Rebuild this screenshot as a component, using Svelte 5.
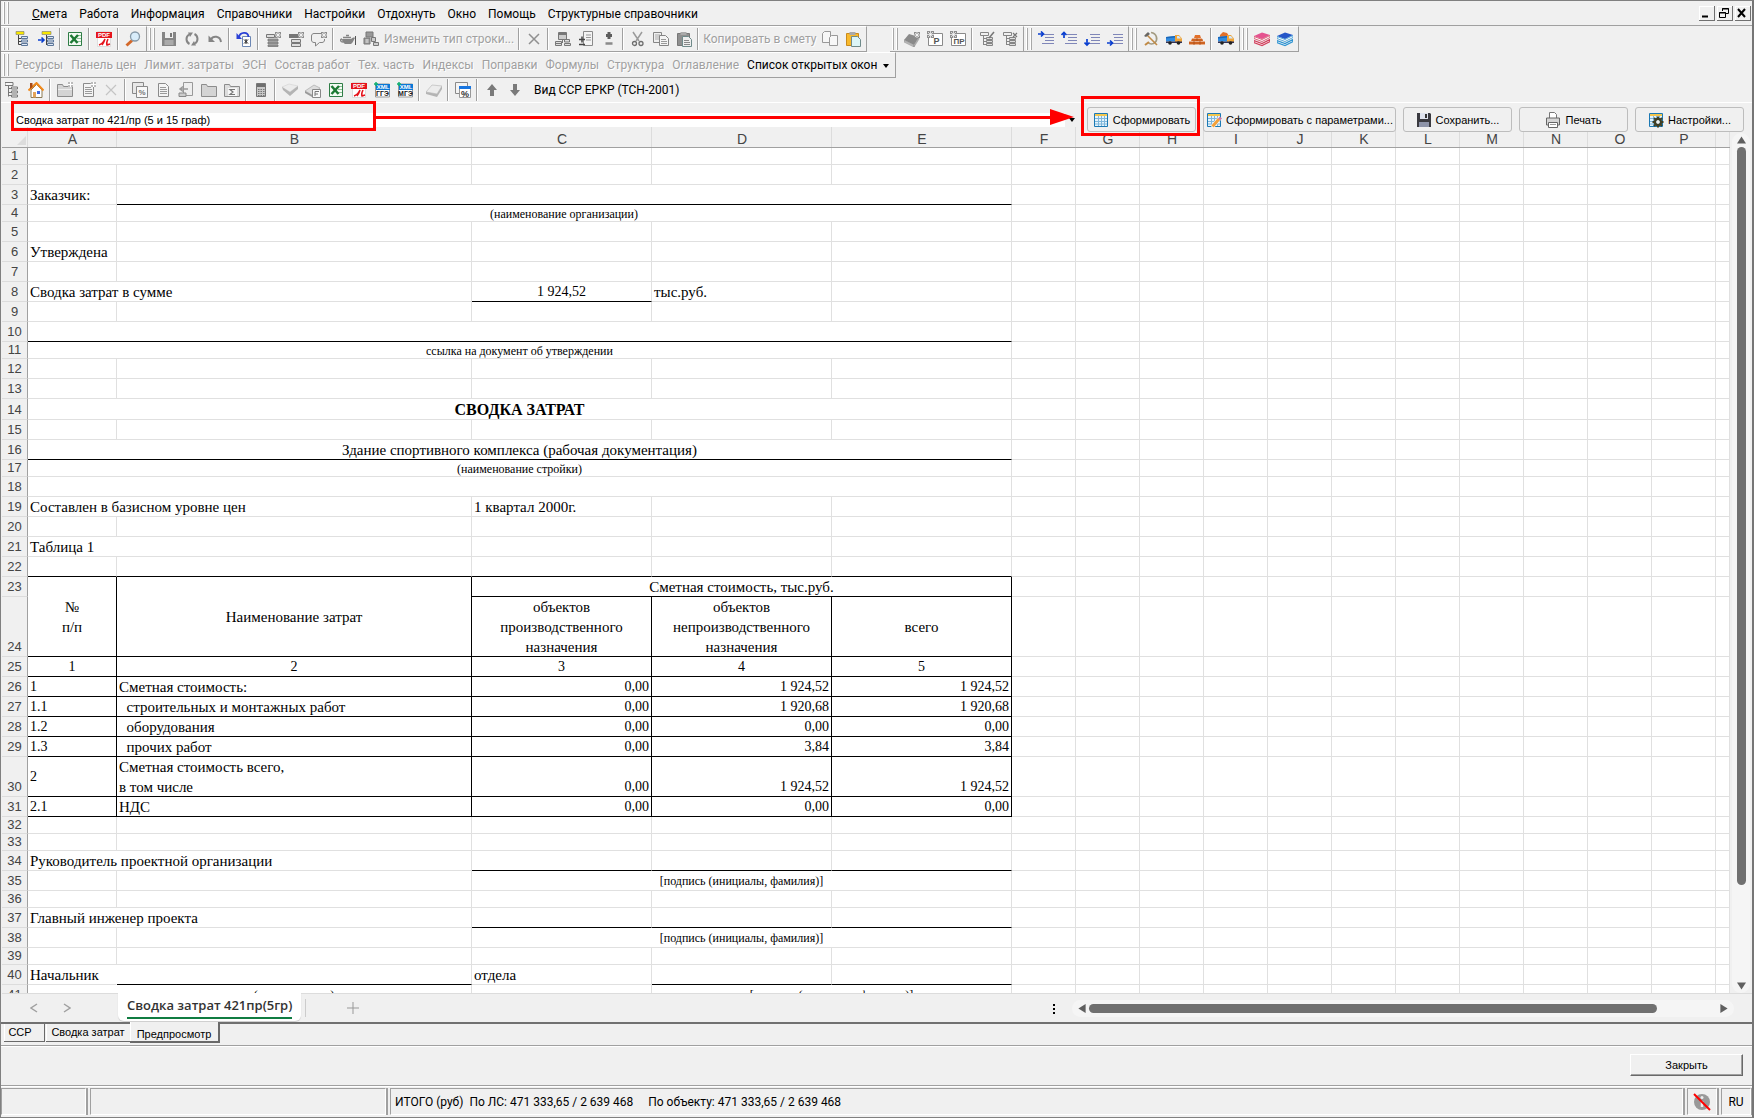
<script>
  const doc = '<path d="M3.5 1.5h7l3 3v10h-10z" fill="#f4f4f4" stroke="#8a8a8a"/><path d="M5 5.5h6M5 7.5h7M5 9.5h7M5 11.5h7" stroke="#9a9a9a"/>';
  const star = '<path d="M10 1h6v6h-6z" fill="#8e8e8e"/><path d="M13 1v6M10 4h6M11 2l4 4M15 2l-4 4" stroke="#fff" stroke-width=".7"/>';
  const truck = '<path d="M0 6l9-1v5.500H0z" fill="#2f8be0"/><path d="M0 6l9-1v1.500l-9 1z" fill="#1b66b8"/><path d="M9 4h4l3 3.500v3.500H9z" fill="#f0a53a"/><path d="M11 5h2l2 2.500h-4z" fill="#cfe8ff"/><path d="M0 10.500h16v1.500H0z" fill="#335"/><circle cx="4" cy="12" r="1.800" fill="#222"/><circle cx="12.500" cy="12" r="1.800" fill="#222"/>';
  const books = (a, b) => `<path d="M0 5l8-3.500L16 4l-8 4z" fill="${a}"/><path d="M0 5.500L8 8.500l8-4v2l-8 4-8-3z" fill="#fff" stroke="${b}" stroke-width=".8"/><path d="M0 9.500l8 3 8-4v2l-8 4-8-3z" fill="#fff" stroke="${b}" stroke-width="1.200"/>`;
  const lines = '<path d="M6 3.500h10M7 6.500h9M7 9.500h9M4 12.500h12" stroke="#7f86b8"/>';
  const tree = '<path d="M3.500 4v9.500M3.500 7.500h3M3.500 10.500h3M3.500 13.500h3" stroke="#444" fill="none"/><path d="M6.500 5.500h6v2h-6zM6.500 9h6v2h-6zM6.500 12.500h6v2h-6z" fill="#dfe8f5" stroke="#5c7699"/>';
  const grayTree = '<path d="M1.500 1.500h8v3h-8zM4.500 5v9M4.500 7.500h3M4.500 10.500h3M4.500 13.500h3" stroke="#858585" fill="none"/><path d="M7.500 6.500h6v2h-6zM7.500 9.500h6v2h-6zM7.500 12.500h6v2h-6z" fill="#ddd" stroke="#858585"/>';
  const clip = (f, s, p) => `<path d="M1.500 2.500h12v12h-12z" fill="${f}" stroke="${s}"/><path d="M4.500 1h6v3h-6z" fill="#aaa"/><path d="M6.500 5.500h6l3 3v7h-9z" fill="${p}" stroke="#6f8a8a"/>`;
  const sheet = '<path d="M1.500 1.500h13v13h-13z" fill="#e4f3fb" stroke="#1b79b4"/><path d="M2 2h12v2H2z" fill="#f3c64d"/><path d="M5.500 4v10M8.500 4v10M11.500 4v10M2 6.500h12M2 9.500h12M2 12h12" stroke="#7fb6db"/>';
  const page = '<path d="M1.500 2.500h14v12h-14z" fill="#fff" stroke="#8a8a8a"/><path d="M0 0h7v7H0z" fill="#8e8e8e"/><path d="M3.500 0v7M0 3.500h7M1 1l5 5M6 1L1 6" stroke="#fff" stroke-width=".7"/>';
  const pdf = '<path d="M1.500.5h13v15h-13z" fill="#fff" stroke="#ddd"/><path d="M0 1h16v6H0z" fill="#e5141c"/><text x="8" y="6.300" font-size="6" font-weight="700" fill="#fff" text-anchor="middle" font-family="Liberation Sans">PDF</text><path d="M3 14c3-1 5-4 6-6M9 8c-1 3-2 5-3 6M12 8c-1 2-2 4-1 6l3-1" fill="none" stroke="#e5141c" stroke-width="1.500"/>';
  const xml = (t) => `<path d="M1.500 2h14v13h-14z" fill="#fff" stroke="#999"/><path d="M2 2h14v6H2z" fill="#0a78d6"/><text x="9" y="7.200" font-size="6" font-weight="700" fill="#fff" text-anchor="middle" font-family="Liberation Sans">XML</text><text x="8.500" y="14.300" font-size="7" font-weight="700" fill="#222" text-anchor="middle" font-family="Liberation Sans">${t}</text><path d="M0 2h4M2 0v4" stroke="#11b070" stroke-width="1.500"/>`;
  const folder = '<path d="M.500 2.500h5l1 2h9v10h-15z" fill="#d4d4d4" stroke="#8c8c8c"/>';

  const icons = {
    treeA: '<path d="M1 .5h8v3H1z" fill="#f7e600" stroke="#777" stroke-width=".6"/>' + tree,
    treeB: '<path d="M4 .5h9v3H4z" fill="#f7e600" stroke="#777" stroke-width=".6"/><path d="M8.500 4v10" stroke="#444"/><path d="M9.500 5.500h6v2h-6zM9.500 9h6v2h-6zM9.500 12.500h6v2h-6z" fill="#dfe8f5" stroke="#5c7699"/><path d="M0 9h6M3.500 6.500L6 9l-2.500 2.500" stroke="#0a3fd0" stroke-width="1.600" fill="none"/>',
    excel: '<path d="M1.500 1.500h13v13h-13z" fill="#f4fbf4" stroke="#2f7d46"/><path d="M10 4.500h4M10 7.500h4M10 10.500h4" stroke="#8cbf95"/><path d="M3.500 4l7 8M11 4l-7.500 8" stroke="#1d7a34" stroke-width="2.500"/>',
    pdf,
    lens: '<path d="M7 9.500L1.500 14.500" stroke="#d3682a" stroke-width="3"/><circle cx="10" cy="5.500" r="4.500" fill="#d8edfb" stroke="#8699a8" stroke-width="1.300"/>',
    save: '<path d="M1 1h14v14H1z" fill="#858585"/><path d="M4 1h8v6H4z" fill="#eee"/><path d="M9 2h2v4H9z" fill="#777"/><path d="M3.500 9h9v5h-9z" fill="#aaa"/>',
    refresh: '<path d="M5.500 13A5.500 5.500 0 0 1 5 3.500M10.500 3a5.500 5.500 0 0 1 .500 9.500" fill="none" stroke="#858585" stroke-width="2"/><path d="M4 1.500h5L6 6zM12 14.500H7l3-4.500z" fill="#858585"/>',
    undo: '<path d="M4 8.500c2-4 9-4 10 2.500" fill="none" stroke="#858585" stroke-width="2"/><path d="M1.500 4.500v6.500H8z" fill="#858585"/>',
    undoDoc: '<path d="M6.500 5.500h8v10h-8z" fill="#fff" stroke="#6c87b4"/><path d="M8 8.500l4 4M12 8.500l-4 4M10 8v5" stroke="#222"/><path d="M3 6C4 1 12 0 12.500 6" fill="none" stroke="#2a41d6" stroke-width="1.800"/><path d="M.5 2v6H6z" fill="#2a41d6"/>',
    rowsA: '<path d="M1.500 3.500h8v3h-8z" fill="#ddd" stroke="#777"/><path d="M3 8h10v2H3zM3 11h10v2H3zM3 14h10v1.500H3z" fill="#999" stroke="#777" stroke-width=".8"/>' + star,
    rowsB: '<path d="M1 3h9v4H1z" fill="#777"/><path d="M3.500 8.500h9v3h-9zM3.500 12.500h9v3h-9z" fill="#ddd" stroke="#777"/>' + star,
    note: '<path d="M10 2.500H3c-1.500 0-2.500 1-2.500 2.500v4c0 1.500 1 2.500 2.500 2.500h1.500v3.500l4-3.500h2.500c1.500 0 2.500-1 2.500-2.500V8" fill="none" stroke="#858585"/>' + star,
    teapot: '<path d="M2 8h9c1-1 3-2 4-1-1 1-2 5-4 6H5C3 12 2 10 2 8z" fill="#858585"/><path d="M3 6.500h8M6 4.500h3M2 8C0 8 0 11 3 11" stroke="#858585" fill="none" stroke-width="1.500"/><path d="M15.500 5v9" stroke="#555"/>',
    blocks: '<path d="M3 1h7v5H3zM1 7h6v6H1z" fill="#999" stroke="#777"/><path d="M8.500 6.500h4v4h-4zM10.500 11.500h5v3h-5z" fill="#ccc" stroke="#777"/><path d="M2.500 9h3M2.500 11h3" stroke="#eee"/>',
    cross: '<path d="M3 3l10 10M13 3L3 13" stroke="#909090" stroke-width="1.500"/>',
    crossL: '<path d="M3 3l10 10M13 3L3 13" stroke="#c4c4c4" stroke-width="1.200"/>',
    calcTree: '<path d="M3.500 1.500h8v7h-8z" fill="#ccc" stroke="#777"/><path d="M4 2h7v2H4z" fill="#777"/><path d="M7.500 9v3M.5 10.500h6v4h-6zM9.500 8.500h5v2.500h-5zM9.500 12.500h6v2h-6z" fill="#ddd" stroke="#777"/><path d="M1 12.500h5" stroke="#777"/>',
    addDoc: '<path d="M5.500.5h9v14h-9z" fill="#f4f4f4" stroke="#8a8a8a"/><path d="M8 4h5M8 6.500h5M8 9h5" stroke="#999"/><path d="M1 8.500h6M4 5.500v6M1 13.500h6" stroke="#444" stroke-width="1.500"/>',
    plusMinus: '<path d="M8 1v7M5 4.500h6" stroke="#5d5d5d" stroke-width="3"/><path d="M4.500 12.500h7" stroke="#8a8a8a" stroke-width="2.500"/>',
    cut: '<path d="M3 1l6 9M12 1L6 10" stroke="#9a9a9a" stroke-width="1.500"/><circle cx="4.500" cy="12.500" r="2" fill="none" stroke="#6e6e6e" stroke-width="1.300"/><circle cx="11" cy="12.500" r="2" fill="none" stroke="#6e6e6e" stroke-width="1.300"/>',
    copy: '<path d="M.5 1.500h8v10h-8z" fill="#eee" stroke="#858585"/><path d="M2 4h5M2 6h5M2 8h5" stroke="#aaa"/><path d="M6.500 4.500h6l3 3v7h-9z" fill="#f4f4f4" stroke="#858585"/><path d="M8 8.500h5M8 10.500h6M8 12.500h6" stroke="#999"/>',
    paste: clip('#8f8f8f', '#777', '#eee') + '<path d="M8 9.500h5M8 11.500h6M8 13.500h6" stroke="#888"/>',
    copyL: '<path d="M.5 2.500l2-2h6v11h-8z" fill="#f7f7f7" stroke="#999"/><path d="M7.500 6.500l2-2h6v10h-8z" fill="#f7f7f7" stroke="#999"/>',
    pasteC: clip('#f8b92c', '#c98a1c', '#dcf5f7'),
    stamp: '<path d="M0 9l5-6 10 3-5 8z" fill="#8a8a8a"/><path d="M0 9l10 5v2L0 11zM10 14l5-8v2l-5 8z" fill="#bbb" stroke="#888" stroke-width=".5"/>' + star,
    pageR: page + '<text x="9.500" y="13.300" font-size="9" font-weight="700" fill="#555" text-anchor="middle" font-family="Liberation Sans">Р</text>',
    pagePR: page + '<text x="9" y="13.300" font-size="8" font-weight="700" fill="#555" text-anchor="middle" font-family="Liberation Sans">ПР</text>',
    treeEdit: grayTree + '<path d="M15 1l-5 6" stroke="#777" stroke-width="1.500"/>',
    treeDel: grayTree + '<path d="M11 2l4 4M15 2l-4 4" stroke="#777" stroke-width="1.200"/>',
    lvl1: lines + '<path d="M0 3h5M3 .5L5.500 3 3 5.500" stroke="#0a3fd0" stroke-width="1.700" fill="none"/>',
    lvl2: lines + '<path d="M3 7V2M.5 4L3 1.500 5.500 4" stroke="#0a3fd0" stroke-width="1.700" fill="none"/>',
    lvl3: lines + '<path d="M3 8v6M.5 11.500L3 14l2.500-2.500" stroke="#0a3fd0" stroke-width="1.700" fill="none"/>',
    lvl4: lines + '<path d="M0 12h5M3 9.500L5.500 12 3 14.500" stroke="#0a3fd0" stroke-width="1.700" fill="none"/>',
    hammer: '<path d="M8 1.500c6 1 7 7 4 10-2 2-5 2-7 0" fill="none" stroke="#a39b82" stroke-width="1.700"/><path d="M3 3l11 11" stroke="#c18a45" stroke-width="1.600"/><path d="M1 5l4-4 2 2-4 3z" fill="#666"/><path d="M6 11l-4 3" stroke="#c18a45" stroke-width="2"/>',
    truck,
    bricks: '<path d="M6 4h5l1 3H5zM3 7.500h10l1 2.500H2zM0 10.500h16v3H0z" fill="#e2702a"/><path d="M3 9h11M0 12h16M8 7v3M5 10v4M11 10v4" stroke="#a84a16" stroke-width=".7"/>',
    truckLoad: '<path d="M2 4l3-3 4 1 2 3-9 1z" fill="#e2702a"/>' + truck,
    booksR: books('#e5528f', '#d0405c'),
    booksB: books('#2456c8', '#2f93d0'),
    treeG: '<path d="M0 .5h8v3H0zM3.500 4v10.500M3.500 6.500h3M3.500 10.500h3M3.500 13.500h3" fill="#f7f7f7" stroke="#777"/><path d="M6.500 5h6v2h-6zM6.500 9h6v2h-6zM6.500 13h6v2h-6z" fill="#eee" stroke="#777"/>',
    home: '<path d="M3 8v7.500h11V8L8.500 2.500z" fill="#fff" stroke="#8a7a55"/><path d="M.500 8.500L8.500 1l7 7.500" fill="none" stroke="#f08a1d" stroke-width="2"/><path d="M2 1h2.500v4L2 7z" fill="#a84a16"/><path d="M9 9h3v3H9z" fill="#3d68e0"/><path d="M5 10h3v5.500H5z" fill="#e2a35c"/>',
    folderNew: folder + '<path d="M1 7.500h14" stroke="#eee"/><path d="M11 0h5v5h-5z" fill="#bbb"/><path d="M13.500 0v5M11 2.500h5" stroke="#fff"/>',
    docNew: doc + '<path d="M11 0h5v5h-5z" fill="#bbb"/><path d="M13.500 0v5M11 2.500h5" stroke="#fff"/>',
    percent: '<path d="M.5.500h11v11H.5z" fill="#e8e8e8" stroke="#8a8a8a"/><path d="M4.500 4.500h11v11h-11z" fill="#f8f8f8" stroke="#8a8a8a"/><text x="10" y="13" font-size="8" font-weight="700" fill="#777" text-anchor="middle" font-family="Liberation Sans">%</text>',
    doc,
    docOut: '<path d="M5.500.5h9v13h-9z" fill="#eee" stroke="#999"/><path d="M1 11h7v3.500H1z" fill="#ccc" stroke="#888"/><path d="M10 7H2M5 4.500L2 7l3 2.500" stroke="#999" fill="none" stroke-width="1.500"/>',
    folder,
    sigma: '<path d="M.500 2.500h5l1 2h9v10h-15z" fill="#ddd" stroke="#8c8c8c"/><path d="M4 6h9v8H4z" fill="#f7f7f7"/><path d="M11 7.500H6l3 2.500-3 2.500h5" fill="none" stroke="#777" stroke-width="1.200"/>',
    calc: '<path d="M3.500 1.500h9v13h-9z" fill="#c8c8c8" stroke="#777"/><path d="M4 2h8v3H4z" fill="#6e6e6e"/><path d="M5 7.500h7M5 9.500h7M5 11.500h7M5 13.500h7" stroke="#777" stroke-dasharray="1.500 1"/>',
    bookG: '<path d="M0 5l7-3 9 2-8 6z" fill="#ececec" stroke="#ccc" stroke-width=".5"/><path d="M0 5l8 5 8-6v3l-8 7-7-6z" fill="#b4b4b4"/>',
    bookF: '<path d="M0 9l9-6 6 3-8 7z" fill="#ddd" stroke="#aaa" stroke-width=".7"/><path d="M0 9l7 4v2L0 11z" fill="#999"/><path d="M7.500 7.500h8v8h-8z" fill="#f7f7f7" stroke="#888"/><path d="M10 14V9.500h4M10 12h3" fill="none" stroke="#777"/>',
    xmlG: xml('ГГЭ'),
    xmlM: xml('МГЭ'),
    bookO: '<path d="M0 10l6-7 10 1-5 8z" fill="#ececec" stroke="#bbb" stroke-width=".7"/><path d="M0 10l11 2 5-8v3l-5 8-11-3z" fill="#b4b4b4"/>',
    window: '<path d="M.5.500h12v11H.5z" fill="#f4f4f4" stroke="#8a8a8a"/><path d="M4.500 4.500h11v11h-11z" fill="#fff" stroke="#999"/><path d="M4 4h12v3H4z" fill="#1976e0"/><text x="10" y="14.500" font-size="9" font-weight="700" fill="#333" text-anchor="middle" font-family="Liberation Sans">%</text>',
    up: '<path d="M8 2l5 6h-3v6H6V8H3z" fill="#7a7a7a"/>',
    down: '<path d="M8 14L3 8h3V2h4v6h3z" fill="#7a7a7a"/>',
    sheet,
    sheetEdit: sheet + '<path d="M14 6L6 15" stroke="#fff" stroke-width="4"/><path d="M13 7L6.500 14.500" stroke="#f2a13b" stroke-width="3"/><path d="M15 5.500l-2 2" stroke="#c77ca8" stroke-width="3"/>',
    disk: '<path d="M1 1h13l1 1v13H1z" fill="#3a3a40"/><path d="M4 1h8v6H4z" fill="#dfe3ee"/><path d="M9 2h2v4H9z" fill="#333"/><path d="M3 10h10v5H3z" fill="#8d93a8"/>',
    print: '<path d="M4.500 6V.5h5l2 2V6" fill="#fff" stroke="#777"/><path d="M1.500 6h13v7h-13z" fill="#d5d5d5" stroke="#666"/><path d="M3.500 10.500h9v5h-9z" fill="#fff" stroke="#666"/><path d="M5 12.500h6" stroke="#999"/>',
    gear: sheet + '<circle cx="10" cy="10" r="3" fill="none" stroke="#3f3f24" stroke-width="2.500"/><path d="M10 4.500v3M10 12.500v3M4.500 10h3M12.500 10h3M6 6l2 2M12 12l2 2M14 6l-2 2M8 12l-2 2" stroke="#3f3f24" stroke-width="2"/><circle cx="10" cy="10" r="1.800" fill="#f0f0f0"/>'
  };

  const menu = ['Смета', 'Работа', 'Информация', 'Справочники', 'Настройки', 'Отдохнуть', 'Окно', 'Помощь', 'Структурные справочники'];

  // "|" is a separator; entries starting with ":" are text commands
  const bars = [
    ['treeA', 'treeB', '|', 'excel', '|', 'pdf', '|', 'lens'],
    ['save', 'refresh', 'undo', '|', 'undoDoc', '|', 'rowsA', 'rowsB', 'note', '|', 'teapot', 'blocks', ':Изменить тип строки...', '|', 'cross', '|', 'calcTree', 'addDoc', 'plusMinus', '|', 'cut', 'copy', 'paste', '|', ':Копировать в смету', 'copyL', 'pasteC'],
    ['stamp', 'pageR', 'pagePR', '|', 'treeEdit', 'treeDel'],
    ['lvl1', 'lvl2', 'lvl3', 'lvl4'],
    ['hammer', 'truck', 'bricks', '|', 'truckLoad'],
    ['booksR', 'booksB']
  ];
  const tabs2 = ['Ресурсы', 'Панель цен', 'Лимит. затраты', 'ЭСН', 'Состав работ', 'Тех. часть', 'Индексы', 'Поправки', 'Формулы', 'Структура', 'Оглавление'];
  const bar3 = ['treeG', 'home', '|', 'folderNew', 'docNew', 'crossL', '|', 'percent', 'doc', 'docOut', 'folder', 'sigma', '|', 'calc', '|', 'bookG', 'bookF', 'excel', 'pdf', 'xmlG', 'xmlM', '|', 'bookO', '|', 'window', '|', 'up', 'down'];

  const actions = [
    ['sheet', 'Сформировать', false],
    ['sheetEdit', 'Сформировать с параметрами...', true],
    ['disk', 'Сохранить...', false],
    ['print', 'Печать', false],
    ['gear', 'Настройки...', false]
  ];

  const letters = [...'ABCDEFGHIJKLMNOP', ''];
  const rest = letters.slice(5);

  // cell: [text, colspan, classes, rowspan]
  const e = ['', 1, ''];
  const five = [e, e, e, e, e];
  const num = (a, b, c, d, f) => [[a, 1, 'b r fig'], [b, 1, 'b r'], [c, 1, 'b r fig end'], [d, 1, 'b r fig end'], [f, 1, 'b r fig end']];
  const rows = [
    [17, [['', 2, ''], e, e, e]],
    [20, five],
    [20, [['Заказчик:', 1, ''], ['', 4, 'b']]],
    [17, [e, ['(наименование организации)', 4, 'mid small']]],
    [20, five],
    [20, [['Утверждена', 1, ''], e, e, e, e]],
    [20, five],
    [20, [['Сводка затрат в сумме', 2, ''], ['1 924,52', 1, 'mid fig b'], ['тыс.руб.', 1, ''], e]],
    [20, five],
    [20, [['', 5, 'b']]],
    [17, [['ссылка на документ об утверждении', 5, 'mid small']]],
    [20, five],
    [20, five],
    [21, [['СВОДКА ЗАТРАТ', 5, 'mid head']]],
    [20, five],
    [20, [['Здание спортивного комплекса (рабочая документация)', 5, 'mid b']]],
    [17, [['(наименование стройки)', 5, 'mid small']]],
    [20, [['', 5, '']]],
    [20, [['Составлен в базисном уровне цен', 2, ''], ['1 квартал 2000г.', 1, ''], e, e]],
    [20, five],
    [20, [['Таблица 1', 2, ''], e, e, e]],
    [20, [['', 1, 'b'], ['', 1, 'b'], ['', 1, 'b'], ['', 1, 'b'], ['', 1, 'b']]],
    [20, [['№\nп/п', 1, 'mid vmid b r', 2], ['Наименование затрат', 1, 'mid vmid b r', 2], ['Сметная стоимость, тыс.руб.', 3, 'mid b r']]],
    [60, [['объектов\nпроизводственного\nназначения', 1, 'mid vmid b r'], ['объектов\nнепроизводственного\nназначения', 1, 'mid vmid b r'], ['всего', 1, 'mid vmid b r']]],
    [20, [['1', 1, 'mid fig b r'], ['2', 1, 'mid fig b r'], ['3', 1, 'mid fig b r'], ['4', 1, 'mid fig b r'], ['5', 1, 'mid fig b r']]],
    [20, num('1', 'Сметная стоимость:', '0,00', '1 924,52', '1 924,52')],
    [20, num('1.1', '  строительных и монтажных работ', '0,00', '1 920,68', '1 920,68')],
    [20, num('1.2', '  оборудования', '0,00', '0,00', '0,00')],
    [20, num('1.3', '  прочих работ', '0,00', '3,84', '3,84')],
    [40, [['2', 1, 'vmid fig b r'], ['Сметная стоимость всего,\nв том числе', 1, 'b r'], ['0,00', 1, 'b r fig end'], ['1 924,52', 1, 'b r fig end'], ['1 924,52', 1, 'b r fig end']]],
    [20, num('2.1', 'НДС', '0,00', '0,00', '0,00')],
    [17, five],
    [17, five],
    [20, [['Руководитель проектной организации', 2, ''], ['', 1, 'b'], ['', 1, 'b'], ['', 1, 'b']]],
    [20, [e, e, ['[подпись (инициалы, фамилия)]', 3, 'mid vmid small']]],
    [17, five],
    [20, [['Главный инженер проекта', 2, ''], ['', 1, 'b'], ['', 1, 'b'], ['', 1, 'b']]],
    [20, [e, e, ['[подпись (инициалы, фамилия)]', 3, 'mid vmid small']]],
    [17, five],
    [20, [['Начальник', 1, 'open'], ['', 1, 'b'], ['отдела', 1, ''], ['', 1, 'b'], ['', 1, 'b']]],
    [20, [['', 1, 'open'], ['(наименование)', 1, 'mid vmid small'], e, ['[подпись (инициалы, фамилия)]', 2, 'mid vmid small']]]
  ];
</script>

{#snippet icon(name)}
  <svg class="ico" viewBox="0 0 16 16" aria-hidden="true">{@html icons[name]}</svg>
{/snippet}

{#snippet tools(items)}
  {#each items as it}
    {#if it === '|'}
      <span class="sep"></span>
    {:else if it[0] === ':'}
      <button class="cmd off">{it.slice(1)}</button>
    {:else}
      <button class="tool" aria-label={it}>{@render icon(it)}</button>
    {/if}
  {/each}
{/snippet}

<div class="app">
  <nav class="menubar">
    <span class="grip"></span>
    {#each menu as m, i}
      <button class="menu" class:first={i === 0}>{m}</button>
    {/each}
    <div class="winctl">
      <button aria-label="Свернуть"><svg viewBox="0 0 14 14"><path d="M3 10.500h6" stroke="#000" stroke-width="2" /></svg></button>
      <button aria-label="Восстановить"><svg viewBox="0 0 14 14"><path d="M5.500 5V2.500h6v5H9M5 3h7M2.500 6.500h6v5h-6zM2 7h7" fill="none" stroke="#000" /></svg></button>
      <button aria-label="Закрыть окно"><svg viewBox="0 0 14 14"><path d="M3 3l7 8M10 3l-7 8" stroke="#000" stroke-width="2" /></svg></button>
    </div>
  </nav>

  <div class="bars">
    {#each bars as b, i}
      <div class="bar" class:apart={i === 2}>
        <span class="grip"></span>
        {@render tools(b)}
      </div>
    {/each}
  </div>

  <div class="bars">
    <div class="bar texts">
      <span class="grip"></span>
      {#each tabs2 as t}
        <button class="txt off">{t}</button>
      {/each}
      <button class="txt">Список открытых окон <svg class="caret" viewBox="0 0 6 4"><path d="M0 0h6L3 4z" /></svg></button>
    </div>
  </div>

  <div class="bar3">
    {@render tools(bar3)}
    <span class="view">Вид ССР ЕРКР (ТСН-2001)</span>
  </div>

  <div class="panel">
    <div class="combo">
      <select aria-label="Форма отчёта"><option>Сводка затрат по 421/пр (5 и 15 граф)</option></select>
      <span class="drop"><svg class="caret" viewBox="0 0 6 4"><path d="M0 0h6L3 4z" /></svg></span>
      <div class="mark"></div>
      <div class="arrow"></div>
    </div>
    <div class="actions">
      {#each actions as [ic, label, wide], i}
        <button class="action" class:wide>
          {@render icon(ic)}{label}
          {#if i === 0}<span class="mark2"></span>{/if}
        </button>
      {/each}
    </div>
  </div>

  <div class="book">
    <div class="sheet">
      <table>
        <colgroup>
          <col class="c0" /><col class="cA" /><col class="cB" /><col class="cC" /><col class="cC" /><col class="cC" />
          {#each rest as l}<col class={l ? 'cF' : ''} />{/each}
        </colgroup>
        <thead>
          <tr>
            <th class="corner"><svg viewBox="0 0 9 9"><path d="M9 0v9H0z" fill="#dcdcdc" /></svg></th>
            {#each letters as l}<th>{l}</th>{/each}
          </tr>
        </thead>
        <tbody>
          {#each rows as [h, cells], i}
            <tr class="h{h}">
              <th>{i + 1}</th>
              {#each cells as [t, span, cls, rs]}
                <td class={cls} colspan={span} rowspan={rs ?? 1}>{#if t}<div>{t}</div>{/if}</td>
              {/each}
              {#each rest as _}<td></td>{/each}
            </tr>
          {/each}
        </tbody>
      </table>
    </div>
    <div class="vscroll">
      <svg viewBox="0 0 10 8"><path d="M5 0l5 8H0z" /></svg>
      <span class="vthumb"></span>
      <svg viewBox="0 0 10 8"><path d="M5 8L0 0h10z" /></svg>
    </div>
  </div>

  <div class="strip">
    <div class="navs">
      <button aria-label="Назад"><svg viewBox="0 0 8 10"><path d="M7 1L1 5l6 4" /></svg></button>
      <button aria-label="Вперёд"><svg viewBox="0 0 8 10"><path d="M1 1l6 4-6 4" /></svg></button>
    </div>
    <button class="sheettab"><span>Сводка затрат 421пр(5гр)</span></button>
    <span class="bar-v"></span>
    <button class="add" aria-label="Новый лист"><svg viewBox="0 0 12 12"><path d="M6 0v12M0 6h12" /></svg></button>
    <svg class="dots" viewBox="0 0 2 10"><path d="M0 0h2v2H0zM0 4h2v2H0zM0 8h2v2H0z" /></svg>
    <div class="hscroll">
      <svg viewBox="0 0 8 10"><path d="M0 5l8-5v10z" /></svg>
      <span class="hthumb"></span>
      <svg viewBox="0 0 8 10"><path d="M8 5L0 0v10z" /></svg>
    </div>
  </div>

  <div class="pages">
    <button class="page">ССР</button>
    <button class="page p2">Сводка затрат</button>
    <button class="page on">Предпросмотр</button>
  </div>

  <div class="footer"><button class="close">Закрыть</button></div>

  <footer class="status">
    <span class="s1"></span>
    <span class="s2"></span>
    <span class="s3">ИТОГО (руб)&nbsp; По ЛС: 471 333,65 / 2 639 468 &nbsp; &nbsp; По объекту: 471 333,65 / 2 639 468</span>
    <span class="s4"><svg viewBox="0 0 18 18"><circle cx="9" cy="9" r="8" fill="#999" /><path d="M9 8v6" stroke="#eee" stroke-width="2.500" /><circle cx="9" cy="4.500" r="1.500" fill="#eee" /><path d="M1 1l16 16" stroke="#f00" stroke-width="2" /></svg></span>
    <span class="s4">RU</span>
  </footer>
</div>

<style>
  :global(body) { margin: 0; background: #f0f0f0; }
  .app {
    box-sizing: border-box;
    display: flex;
    flex-direction: column;
    height: 100vh;
    overflow: hidden;
    background: #f0f0f0;
    border: 1px solid #808080;
    border-right: 2px solid #767676;
    font: 12px/16px Roboto, "Noto Sans", sans-serif;
    color: #000;
  }
  button { font: inherit; color: inherit; background: none; border: 0; padding: 0; margin: 0; white-space: nowrap; }
  .grip {
    box-sizing: border-box;
    width: 5px;
    height: 22px;
    margin: 0 5px 0 3px;
    border: solid #a8a8a8;
    border-width: 0 1px;
    box-shadow: -1px 0 #fff, inset -1px 0 #fff;
    flex: none;
  }
  .menubar { display: flex; align-items: center; height: 24px; border-bottom: 1px solid #a0a0a0; flex: none; }
  .menubar .grip { margin-right: 17px; }
  .menu { padding: 1px 6px 0; }
  .menu.first::first-letter { text-decoration: underline; }
  .winctl { display: flex; margin-left: auto; padding-right: 1px; gap: 2px; }
  .winctl button { width: 16px; height: 15px; box-shadow: inset -1px -1px #707070, inset 1px 1px #fff; }
  .winctl svg { width: 14px; height: 14px; display: block; }

  .bars { display: flex; height: 26px; flex: none; }
  .bar {
    box-sizing: border-box;
    display: flex;
    align-items: center;
    height: 26px;
    padding-right: 2px;
    border-right: 1px solid #a0a0a0;
    border-bottom: 1px solid #a0a0a0;
    border-top: 1px solid #fff;
  }
  .bar .grip { margin-right: 2px; }
  .apart { margin-left: 23px; }
  .tool { width: 23px; height: 22px; display: grid; place-items: center; flex: none; }
  .ico { width: 16px; height: 16px; flex: none; display: block; }
  .sep { width: 6px; height: 22px; flex: none; background: linear-gradient(#a0a0a0, #a0a0a0) 2px 0 / 1px 100% no-repeat, linear-gradient(#fff, #fff) 3px 0 / 1px 100% no-repeat; }
  .cmd { padding: 0 2px; }
  .off { color: #a0a0a0; text-shadow: 1px 1px #fff; }
  .texts .txt { padding: 0 4px; }
  .caret { width: 6px; height: 4px; margin-left: 3px; vertical-align: middle; }
  .bar3 { display: flex; align-items: center; height: 24px; border-bottom: 1px solid #fff; flex: none; }
  .view { margin-left: 8px; }

  .panel {
    display: flex;
    align-items: flex-start;
    height: 24px;
    padding: 0 8px 0 10px;
    font: 11px/14px "Liberation Sans", sans-serif;
    position: relative;
    z-index: 1;
    flex: none;
  }
  .combo { position: relative; display: flex; flex: 1; margin-top: 10px; height: 14px; background: #fff; }
  .combo select { appearance: none; flex: 1; min-width: 0; border: 0; background: #fff; padding: 0 0 0 5px; margin: 0; height: 14px; font: inherit; color: #000; }
  .drop { width: 13px; background: #f0f0f0; display: grid; place-items: center; }
  .drop .caret { margin: 0; }
  .mark { position: absolute; box-sizing: border-box; left: 0; top: -12px; width: 365px; height: 30px; border: 3px solid #f00; pointer-events: none; }
  .arrow { position: absolute; left: 365px; right: 28px; top: 3px; height: 3px; background: #f00; pointer-events: none; }
  .arrow::after { content: ""; position: absolute; left: 100%; top: -7px; border: solid transparent; border-width: 8px 0 8px 24px; border-left-color: #f00; }
  .actions { display: flex; gap: 7px; margin: 4px 0 0 9px; }
  .action {
    position: relative;
    box-sizing: border-box;
    display: flex;
    align-items: center;
    justify-content: center;
    gap: 4px;
    width: 109px;
    height: 25px;
    border: 1px solid #bdbdbd;
    border-radius: 3px;
    background: #f0f0f0;
  }
  .wide { width: 193px; }
  .mark2 { position: absolute; inset: -12px -5px -5px -7px; border: 3px solid #f00; pointer-events: none; }

  .book { display: flex; flex: 1; min-height: 0; overflow: hidden; }
  .sheet { flex: 1; min-width: 0; overflow: hidden; margin-left: 1px; background: #fff; }
  table { width: 100%; table-layout: fixed; border-collapse: separate; border-spacing: 0; font: 15px/20px "Liberation Serif", serif; }
  .c0 { width: 26px; }
  .cA { width: 89px; }
  .cB { width: 355px; }
  .cC { width: 180px; }
  .cF { width: 64px; }
  th { padding: 0; background: #f0f0f0; font: 14px/16px "Liberation Sans", sans-serif; color: #444; vertical-align: bottom; overflow: hidden; }
  thead th { height: 20px; border-bottom: 1px solid #a0a0a0; box-shadow: inset -1px 0 #dcdcdc; }
  .corner svg { width: 9px; height: 9px; margin: 0 0 2px 12px; vertical-align: bottom; }
  tbody th { border-right: 1px solid #a0a0a0; border-bottom: 1px solid #dcdcdc; font-size: 13px; }
  tbody tr:not(.h17) th { padding-bottom: 1px; }
  td { padding: 0 2px; border-right: 1px solid #e0e0e0; border-bottom: 1px solid #e0e0e0; vertical-align: bottom; white-space: pre; overflow: hidden; }
  td div { margin-bottom: -1px; }
  .h17 { height: 17px; }
  .h20 { height: 20px; }
  .h21 { height: 21px; }
  .h40 { height: 40px; }
  .h60 { height: 60px; }
  .mid { text-align: center; }
  .end { text-align: right; }
  .vmid { vertical-align: middle; }
  .fig { font-size: 14px; }
  .small { font-size: 12px; line-height: 16px; }
  .head { font-size: 16px; font-weight: 700; }
  .b { border-bottom-color: #000; }
  .r { border-right-color: #000; }
  .open { border-right-color: #fff; }

  .vscroll { display: flex; flex-direction: column; align-items: center; width: 18px; margin: 6px 2px 0 2px; padding: 3px 0; border-radius: 9px; background: #f5f5f5; box-sizing: border-box; }
  .vscroll svg { width: 9px; height: 8px; fill: #606060; flex: none; }
  .vthumb { width: 9px; flex: 0 1 738px; margin: 3px 0 auto; border-radius: 5px; background: #707070; }

  .strip { display: flex; align-items: center; height: 29px; border-top: 1px solid #dcdcdc; box-sizing: border-box; flex: none; font: 600 13px/20px "Open Sans", "Noto Sans", sans-serif; margin-left: 1px; }
  .navs { display: flex; gap: 25px; width: 116px; padding-left: 28px; box-sizing: border-box; }
  .navs svg { width: 8px; height: 10px; fill: none; stroke: #a0a0a0; stroke-width: 1.5; display: block; }
  .sheettab { align-self: flex-start; height: 28px; margin-top: -1px; padding: 0 9px; background: #fff; border-radius: 0 0 6px 6px; box-shadow: 0 1px 1px #ccc; color: #333; }
  .sheettab span { display: block; height: 22px; border-bottom: 2px solid #107c41; }
  .bar-v { width: 1px; height: 18px; margin-left: 4px; background: #ccc; }
  .add { margin-left: 41px; }
  .add svg { width: 12px; height: 12px; stroke: #999; display: block; }
  .dots { width: 2px; height: 10px; margin: 2px 17px 0 auto; }
  .hscroll { box-sizing: border-box; display: flex; align-items: center; width: 38%; max-width: 662px; height: 17px; padding: 0 6px; margin-right: 18px; border-radius: 9px; background: #f5f5f5; }
  .hscroll svg { width: 8px; height: 9px; fill: #606060; flex: none; }
  .hthumb { height: 9px; flex: 0 1 568px; margin: 0 auto 0 3px; border-radius: 5px; background: #707070; }

  .pages { display: flex; align-items: flex-start; height: 24px; padding-left: 3px; border-top: 2px solid #707070; border-bottom: 1px solid #a0a0a0; font: 11px/16px "Liberation Sans", sans-serif; flex: none; box-sizing: border-box; }
  .page { height: 18px; width: 41px; border: solid #696969; border-width: 0 1px 1px 0; box-shadow: inset 1px 0 #fff; padding: 0 8px 1px 0; box-sizing: border-box; }
  .p2 { width: 84px; padding: 0 0 1px; border-right: 0; margin-left: 1px; }
  .on { width: 90px; height: 21px; margin-top: -2px; padding: 4px 0 0; background: #f0f0f0; border-width: 0 2px 2px 0; }
  .footer { display: flex; justify-content: flex-end; align-items: flex-start; height: 31px; padding: 7px 9px 0 0; border-top: 1px solid #fff; border-bottom: 1px solid #a0a0a0; font: 11px/14px "Liberation Sans", sans-serif; flex: none; }
  .close { width: 113px; height: 22px; border: 1px solid; border-color: #fff #696969 #696969 #fff; box-shadow: inset -1px -1px #a0a0a0; }

  .status { display: flex; gap: 4px; height: 31px; padding: 1px 1px 2px 0; border-top: 1px solid #fff; box-sizing: border-box; flex: none; }
  .status span { display: flex; align-items: center; box-sizing: border-box; border: 1px solid; border-color: #a0a0a0 #fff #fff #a0a0a0; box-shadow: 2px 0 #a0a0a0; white-space: nowrap; overflow: hidden; }
  .s1 { width: 85px; }
  .s2 { width: 296px; }
  .s3 { flex: 1; padding-left: 4px; }
  .s4 { width: 30px; justify-content: center; }
  .s4 svg { width: 18px; height: 18px; }
</style>
